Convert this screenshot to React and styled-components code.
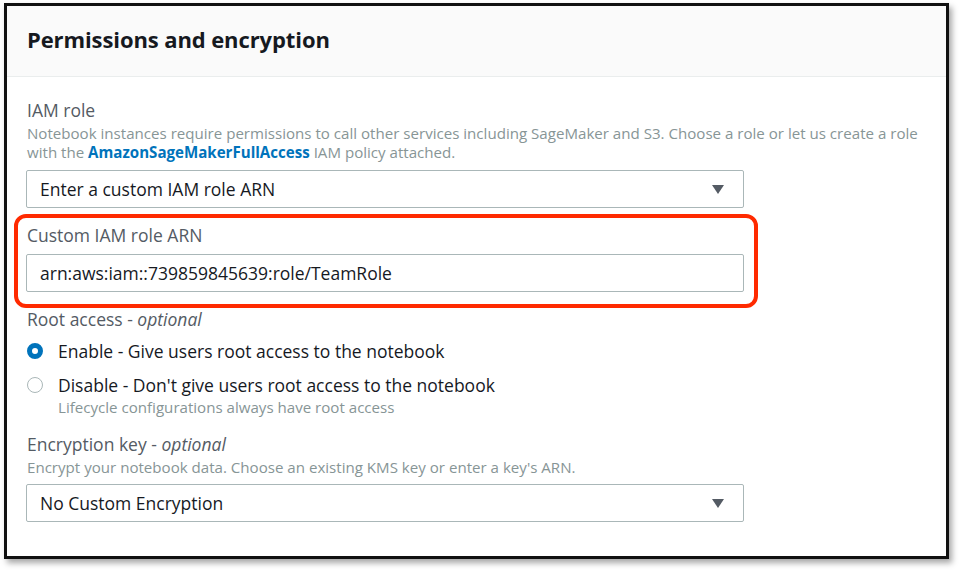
import React from "react";
import styled, { createGlobalStyle } from "styled-components";

const COLORS = {
  text: "#16191f",
  label: "#545b64",
  muted: "#879596",
  link: "#0073bb",
  border: "#aab7b8",
  headerBg: "#fafafa",
  divider: "#eaeded",
  highlight: "#ff2a00",
};

const GlobalStyle = createGlobalStyle`
  html, body {
    margin: 0;
    padding: 0;
    background: #ffffff;
  }
  body {
    font-family: "Open Sans", "Noto Sans", Arial, sans-serif;
    color: ${COLORS.text};
  }
`;

const Page = styled.div`
  width: 960px;
  height: 570px;
  padding: 3px 0 0 4px;
  box-sizing: border-box;
`;

const Card = styled.section`
  width: 945px;
  height: 556px;
  box-sizing: border-box;
  border: 3px solid #111111;
  background: #ffffff;
  box-shadow: 3px 4px 6px rgba(0, 0, 0, 0.35);
  display: flex;
  flex-direction: column;
`;

const Header = styled.header`
  height: 71px;
  box-sizing: border-box;
  background: ${COLORS.headerBg};
  border-bottom: 1px solid ${COLORS.divider};
  display: flex;
  align-items: center;
  padding: 0 20px 4px;
`;

const Title = styled.h2`
  margin: 0;
  font-size: 22px;
  font-weight: 700;
  color: ${COLORS.text};
  letter-spacing: -0.1px;
`;

const Body = styled.div`
  padding: 22px 19px 0 19px;
  display: flex;
  flex-direction: column;
`;

const Field = styled.div`
  display: flex;
  flex-direction: column;
  margin-top: ${(p) => p.$top || 0}px;
`;

const Label = styled.div`
  font-size: 17.5px;
  line-height: 22px;
  color: ${COLORS.label};
  padding-left: 1px;

  em {
    font-style: italic;
  }
`;

const Description = styled.div`
  font-size: 15.1px;
  line-height: 19px;
  color: ${COLORS.muted};
  padding-left: 1px;
  margin-top: 3px;
  white-space: nowrap;

  a {
    color: ${COLORS.link};
    font-weight: 700;
    text-decoration: none;
  }
`;

const Control = styled.div`
  width: 718px;
  height: 38px;
  box-sizing: border-box;
  border: 1px solid ${COLORS.border};
  border-radius: 2px;
  background: #ffffff;
  display: flex;
  align-items: center;
  justify-content: space-between;
  padding: 0 19px 0 13px;
  margin-top: ${(p) => p.$top || 0}px;
  font-size: 17.5px;
  color: ${COLORS.text};
`;

const Caret = styled.span`
  width: 0;
  height: 0;
  border-left: 6px solid transparent;
  border-right: 6px solid transparent;
  border-top: 9px solid #545b64;
`;

const Highlight = styled.div`
  margin: 6px 0 0 -12px;
  width: 744px;
  box-sizing: border-box;
  border: 4px solid ${COLORS.highlight};
  border-radius: 12px;
  padding: 6px 10px 12px 8px;
  display: flex;
  flex-direction: column;
`;

const RadioGroup = styled.div`
  display: flex;
  flex-direction: column;
  gap: 12px;
  margin-top: 10px;
`;

const RadioRow = styled.label`
  display: grid;
  grid-template-columns: 16px 1fr;
  column-gap: 15px;
  align-items: start;
  padding-left: 1px;
`;

const RadioDot = styled.span`
  width: 16px;
  height: 16px;
  margin-top: 3px;
  box-sizing: border-box;
  border-radius: 50%;
  border: ${(p) => (p.$checked ? `5px solid ${COLORS.link}` : `1px solid ${COLORS.border}`)};
  background: #ffffff;
`;

const RadioText = styled.div`
  font-size: 17.5px;
  line-height: 22px;
  color: ${COLORS.text};
`;

const RadioHint = styled.div`
  font-size: 15.1px;
  line-height: 19px;
  color: ${COLORS.muted};
  margin-top: 2px;
`;

const Select = ({ value, top }) => (
  <Control $top={top}>
    <span>{value}</span>
    <Caret />
  </Control>
);

const Radio = ({ checked, children, hint }) => (
  <RadioRow>
    <RadioDot $checked={checked} />
    <div>
      <RadioText>{children}</RadioText>
      {hint && <RadioHint>{hint}</RadioHint>}
    </div>
  </RadioRow>
);

const App = () => (
  <>
    <GlobalStyle />
    <Page>
      <Card>
        <Header>
          <Title>Permissions and encryption</Title>
        </Header>
        <Body>
          <Field>
            <Label>IAM role</Label>
            <Description>
              Notebook instances require permissions to call other services including
              SageMaker and S3. Choose a role or let us create a role
              <br />
              with the <a href="#">AmazonSageMakerFullAccess</a> IAM policy attached.
            </Description>
            <Select value="Enter a custom IAM role ARN" top={8} />
          </Field>

          <Highlight>
            <Label>Custom IAM role ARN</Label>
            <Control $top={8}>
              <span>arn:aws:iam::739859845639:role/TeamRole</span>
            </Control>
          </Highlight>

          <Field>
            <Label>
              Root access - <em>optional</em>
            </Label>
            <RadioGroup>
              <Radio checked>Enable - Give users root access to the notebook</Radio>
              <Radio hint="Lifecycle configurations always have root access">
                Disable - Don't give users root access to the notebook
              </Radio>
            </RadioGroup>
          </Field>

          <Field $top={16}>
            <Label>
              Encryption key - <em>optional</em>
            </Label>
            <Description>
              Encrypt your notebook data. Choose an existing KMS key or enter a key's ARN.
            </Description>
            <Select value="No Custom Encryption" top={7} />
          </Field>
        </Body>
      </Card>
    </Page>
  </>
);

export default App;
